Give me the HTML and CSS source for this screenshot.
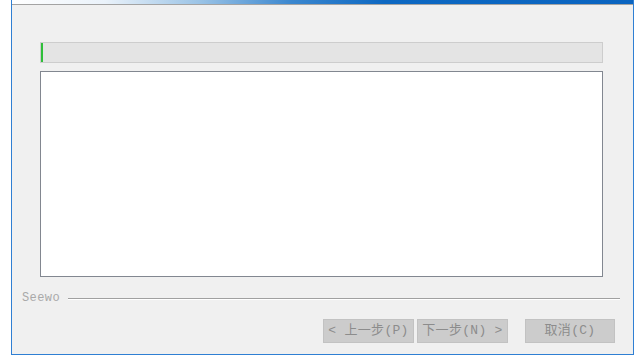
FILE: index.html
```html
<!DOCTYPE html>
<html>
<head>
<meta charset="utf-8">
<link rel="stylesheet" href="styles.css">
</head>
<body>
<div class="window">
  <div class="titlebar"></div>
  <div class="content">
    <div class="progress"><div class="progress-fill"></div></div>
    <div class="log"></div>
    <div class="brand-row">
      <span class="brand">Seewo</span>
      <span class="brand-line"></span>
    </div>
    <div class="buttons">
      <button class="btn">&lt; 上一步(P)</button>
      <button class="btn btn-next">下一步(N) &gt;</button>
      <button class="btn btn-cancel">取消(C)</button>
    </div>
  </div>
</div>
</body>
</html>
```

FILE: styles.css
```css
html, body {
  margin: 0;
  padding: 0;
  background: #ffffff;
  width: 644px;
  height: 362px;
  overflow: hidden;
}

.window {
  margin-left: 11px;
  width: 621px;
  height: 354px;
  border-left: 1px solid #2f7fd3;
  border-right: 1px solid #2f7fd3;
  border-bottom: 1px solid #2f7fd3;
  background: #f0f0f0;
  display: flex;
  flex-direction: column;
}

.titlebar {
  height: 4px;
  border-bottom: 1px solid #a3a3a3;
  background: linear-gradient(to right, #ffffff 0%, #eaf2fa 15%, #9cc4e6 30%, #3b87cf 45%, #0d68c2 60%, #0a64c0 100%);
}

.content {
  flex: 1;
  display: flex;
  flex-direction: column;
  padding: 37px 30px 0 28px;
}

.progress {
  height: 19px;
  border: 1px solid #cdcdcd;
  background: #e4e4e4;
  display: flex;
}

.progress-fill {
  width: 2px;
  background: #2fbf3a;
}

.log {
  margin-top: 8px;
  height: 204px;
  border: 1px solid #828790;
  background: #ffffff;
}

.brand-row {
  margin: 14px -17px 0 -18px;
  display: flex;
  align-items: center;
  gap: 8px;
}

.brand {
  font-family: "Liberation Mono", monospace;
  font-size: 12px;
  letter-spacing: 0.4px;
  color: #a9a9a9;
  line-height: 14px;
}

.brand-line {
  flex: 1;
  height: 1px;
  background: #a0a0a0;
  border-bottom: 1px solid #ffffff;
  margin-top: 2px;
}

.buttons {
  margin-top: 14px;
  display: flex;
  justify-content: flex-end;
  margin-right: -12px;
}

.btn {
  width: 91px;
  height: 24px;
  padding: 0;
  margin: 0;
  border: 1px solid #c2c2c2;
  background: #cccccc;
  color: #8c8c8c;
  font-family: "Liberation Mono", "Noto Sans CJK SC", monospace;
  font-size: 13px;
  letter-spacing: 0.3px;
  line-height: 22px;
}

.btn-next {
  margin-left: 3px;
}

.btn-cancel {
  margin-left: 17px;
  width: 90px;
}
```
